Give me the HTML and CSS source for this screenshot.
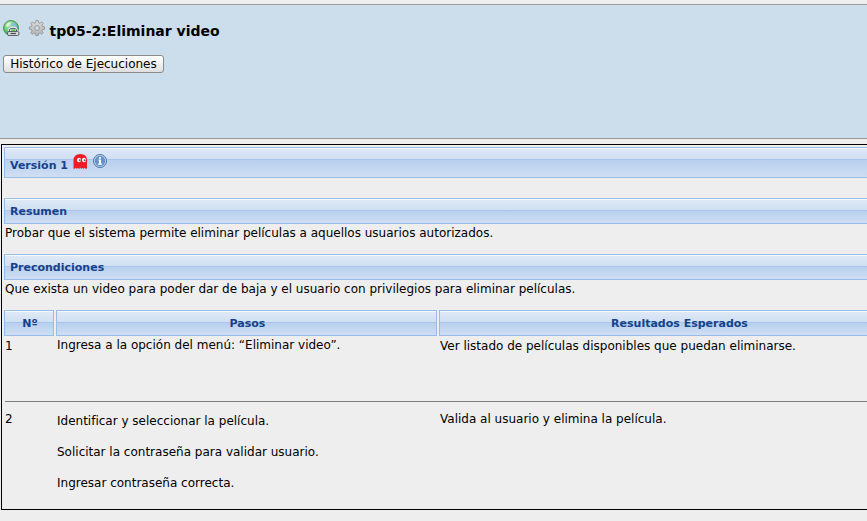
FILE: index.html
```html
<!DOCTYPE html>
<html lang="es">
<head>
<meta charset="utf-8">
<title>tp05-2:Eliminar video</title>
<link rel="stylesheet" href="styles.css">
</head>
<body>
<header class="top">
  <div class="title-row">
    <svg class="link-icon" width="17" height="17" viewBox="0 0 17 17">
      <defs><radialGradient id="globe" cx=".4" cy=".3" r=".7"><stop offset="0" stop-color="#c9f3c2"/><stop offset=".6" stop-color="#62c866"/><stop offset="1" stop-color="#2f9a45"/></radialGradient></defs>
      <circle cx="8" cy="8" r="7.500" fill="url(#globe)" stroke="#4c9a62"/>
      <path d="M10 2Q14 4 14.500 8L12 8 10 5 7 8 4 12 5 9 8 5Z" fill="#87bde0"/>
      <path d="M3 5Q5 2 8 2L6 5 4 7Z" fill="#dcf7d9"/>
      <path d="M6.500 11.500V9.500L8 8H12L13.500 9.500V11.500" fill="none" stroke="#e6e6e6" stroke-width="2.400"/>
      <path d="M6.500 11V9.500L8 8.500H12L13.500 9.500V11" fill="none" stroke="#596265"/>
      <rect x="4.500" y="11.500" width="11.500" height="4" rx="1.500" fill="#d8d8d8" stroke="#596265"/>
      <path d="M7.500 13.500H13" stroke="#444d50" stroke-width="1.200"/>
    </svg>
    <svg class="gear-icon" width="16" height="16" viewBox="0 0 16 16">
      <defs><linearGradient id="metal" x2="0" y2="1"><stop offset="0" stop-color="#dadada"/><stop offset="1" stop-color="#b5b5b5"/></linearGradient></defs>
      <path fill="url(#metal)" fill-rule="evenodd" stroke="#8c8c8c" stroke-width=".8" d="M6.800.5H9.200L9.500 2.600 11.200 3.300 12.600 1.800 14.300 3.500 12.900 5 13.500 6.600 15.500 6.900V9.200L13.500 9.500 12.900 11.100 14.300 12.700 12.600 14.300 11.100 13 9.500 13.600 9.200 15.500H6.800L6.500 13.600 4.900 13 3.400 14.300 1.700 12.700 3.100 11.100 2.500 9.500.5 9.200V6.900L2.500 6.600 3.100 5 1.700 3.500 3.400 1.800 4.900 3.300 6.500 2.600ZM8 5.600A2.400 2.400 0 1 0 8 10.400 2.400 2.400 0 1 0 8 5.600Z"/>
    </svg>
    <h1>tp05-2:Eliminar video</h1>
  </div>
  <button class="history" type="button">Histórico de Ejecuciones</button>
</header>
<main class="case">
  <div class="bar version">
    <span>Versión 1</span>
    <svg class="ghost" width="15" height="15" viewBox="0 0 15 15">
      <path d="M.5 14.500V6.500Q.5 0 7.300 0T14 6.500V14.500Q12.500 15.500 11.500 13.800 10.500 15.500 9.300 13.800 8.300 15.500 7.300 13.800 6.300 15.500 5 13.800 4 15.500 2.800 13.800 1.500 15.500.5 14.500Z" fill="#ed1c24"/>
      <ellipse cx="6" cy="6" rx="2" ry="2.200" fill="#fff"/><ellipse cx="11" cy="6" rx="2" ry="2.200" fill="#fff"/>
      <circle cx="6.700" cy="6.200" r="1" fill="#5b6374"/><circle cx="11.700" cy="6.200" r="1" fill="#5b6374"/>
    </svg>
    <svg class="info" width="14" height="14" viewBox="0 0 14 14">
      <circle cx="7" cy="7" r="6.500" fill="#bfd3e8" stroke="#4a75a8"/>
      <circle cx="7" cy="7" r="5.200" fill="#6795c9"/>
      <path d="M6 3H8V4.700H6ZM5.500 5.500H8V9.500H9V10.800H5V9.500H6V6.700H5.500Z" fill="#fff"/>
    </svg>
  </div>
  <h2 class="bar">Resumen</h2>
  <p class="text">Probar que el sistema permite eliminar películas a aquellos usuarios autorizados.</p>
  <h2 class="bar">Precondiciones</h2>
  <p class="text">Que exista un video para poder dar de baja y el usuario con privilegios para eliminar películas.</p>
  <div class="grid head">
    <div class="bar">Nº</div><div class="bar">Pasos</div><div class="bar">Resultados Esperados</div>
  </div>
  <div class="grid step first">
    <div class="num">1</div>
    <div class="action">Ingresa a la opción del menú: “Eliminar video”.</div>
    <div class="result">Ver listado de películas disponibles que puedan eliminarse.</div>
  </div>
  <div class="grid step second">
    <div class="num">2</div>
    <div class="action"><p>Identificar y seleccionar la película.</p><p>Solicitar la contraseña para validar usuario.</p><p>Ingresar contraseña correcta.</p></div>
    <div class="result">Valida al usuario y elimina la película.</div>
  </div>
</main>
</body>
</html>
```
FILE: styles.css
```css
* { box-sizing: border-box; }
html { overflow: hidden; }
body {
  margin: 0;
  padding-top: 4px;
  height: 521px;
  overflow: hidden;
  background: #eee;
  color: #000;
  font: 12px/15px "DejaVu Sans", sans-serif;
}
h1, h2, p { margin: 0; }
svg { display: block; flex: none; }
.top {
  height: 135px;
  padding: 15px 3px 0;
  background: #ccddec;
  border-top: 1px solid #999;
  border-bottom: 1px solid #999;
}
.title-row { display: flex; height: 35px; }
.gear-icon { margin-left: 9px; }
h1 { margin: 2px 0 0 4.5px; font-size: 14px; line-height: 18px; }
.history {
  display: block;
  width: 161px;
  height: 18px;
  padding: 0;
  border: 1px solid #8b8b8b;
  border-radius: 3px;
  background: linear-gradient(#fff, #f3f3f3 45%, #dedede);
  color: #000;
  font: 12px/15px "DejaVu Sans", sans-serif;
}
.case {
  height: 366px;
  margin: 5px 0 0 1px;
  padding: 2px 0 0 2px;
  border: 1px solid #000;
  border-right: 0;
  overflow: hidden;
}
.bar {
  height: 26px;
  padding-left: 5px;
  border: 1px solid #99bbe8;
  background: linear-gradient(#f5f9fe 0 1px, #dfe9f6 1px, #d0dff3 11px, #a9c6ea 11px 12px, #b8cfee 12px, #cfdff3 100%);
  color: #15428b;
  font-size: 11px;
  font-weight: bold;
  line-height: 25px;
}
.version, h2.bar { border-right: 0; }
.version {
  display: flex;
  height: 31px;
  margin-bottom: 20px;
  line-height: 36px;
}
.ghost { margin: 6px 0 0 5px; }
.info { margin: 6px 0 0 5px; }
.text { height: 30px; padding: 2px 0 0 1px; }
.grid { display: grid; grid-template-columns: 50px 381px 481px; column-gap: 2px; }
.head .bar { padding: 0; text-align: center; }
.head .bar:not(:last-child) { padding-left: 2px; }
.step > div { padding-left: 1px; }
.first {
  height: 66px;
  margin-left: 1px;
  padding-top: 3px;
  grid-template-columns: 49px 381px 481px;
  border-bottom: 1px solid #808080;
}
.first .num { padding-left: 0; }
.first .action { margin-top: -1px; }
.second { padding-top: 10px; }
.second .action { padding-top: 2px; }
.second p { margin-bottom: 16px; }
```
